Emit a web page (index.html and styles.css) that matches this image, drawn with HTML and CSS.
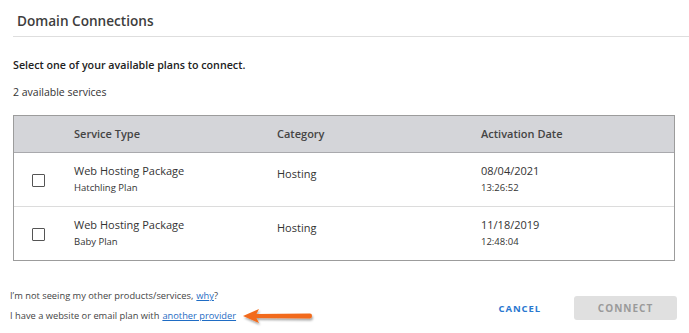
FILE: index.html
```html
<!DOCTYPE html>
<html>
<head>
	<title>Domain Connections</title>
	<link rel="stylesheet" href="styles.css">
</head>
<body>
	<section class="dialog">
		<header class="dialog-head">
			<h1 class="dialog-title">Domain Connections</h1>
		</header>

		<p class="lead">Select one of your available plans to connect.</p>
		<p class="count">2 available services</p>

		<!-- list of plans -->
		<div class="plans">
			<div class="plan-row plan-head">
				<span class="cell cell-check"></span>
				<span class="cell cell-type">Service Type</span>
				<span class="cell cell-cat">Category</span>
				<span class="cell cell-date">Activation Date</span>
			</div>
			<div class="plan-row">
				<span class="cell cell-check"><span class="box"></span></span>
				<span class="cell cell-type">Web Hosting Package<small>Hatchling Plan</small></span>
				<span class="cell cell-cat">Hosting</span>
				<span class="cell cell-date">08/04/2021<small>13:26:52</small></span>
			</div>
			<div class="plan-row">
				<span class="cell cell-check"><span class="box"></span></span>
				<span class="cell cell-type">Web Hosting Package<small>Baby Plan</small></span>
				<span class="cell cell-cat">Hosting</span>
				<span class="cell cell-date">11/18/2019<small>12:48:04</small></span>
			</div>
		</div>

		<footer class="dialog-foot">
			<div class="notes">
				<p>I’m not seeing my other products/services, <a href="#!">why</a>?</p>
				<p>I have a website or email plan with <a href="#!">another provider</a>
					<svg class="arrow" width="80" height="20" viewBox="0 0 80 20">
						<defs>
							<filter id="sh" x="-20%" y="-50%" width="140%" height="200%">
								<feDropShadow dx="1" dy="2" stdDeviation="1.2" flood-color="#000" flood-opacity="0.35"/>
							</filter>
						</defs>
						<path filter="url(#sh)" fill="#f26a1b" d="M2 9 L18 2 L15.5 7 L69 6.6 Q71 6.6 71 9 Q71 11.4 69 11.4 L15.5 11 L18 16 Z"/>
					</svg>
				</p>
			</div>
			<div class="actions">
				<a href="#!" class="btn-cancel">CANCEL</a>
				<span class="btn-connect">CONNECT</span>
			</div>
		</footer>
	</section>
</body>
</html>
```

FILE: styles.css
```css
	body {
		font-family: "Open Sans", "Liberation Sans", sans-serif;
		background: #fff;
		color: #333;
		margin: 0;
	}
	p {
		margin: 0;
	}
	.dialog {
		width: 689px;
		height: 333px;
		box-sizing: border-box;
		padding: 0 12px 0 13px;
	}
	.dialog-head {
		border-bottom: 1px solid #dedede;
		margin-right: -12px;
		padding: 12px 0 6px 4px;
	}
	.dialog-title {
		margin: 0;
		font-size: 13.6px;
		font-weight: 600;
		color: #3d3d3d;
		line-height: 18px;
	}
	.lead {
		margin-top: 20px;
		font-size: 10.7px;
		font-weight: 600;
		color: #222;
		line-height: 16px;
	}
	.count {
		margin-top: 11px;
		font-size: 10.5px;
		color: #333;
		line-height: 16px;
	}

	/* table */
	.plans {
		margin-top: 15px;
		border: 1px solid #9c9c9c;
		width: 662px;
		box-sizing: border-box;
	}
	.plan-row {
		display: grid;
		grid-template-columns: 60px 203px 204px 1fr;
		align-items: start;
		height: 53px;
		border-top: 1px solid #dcdcdc;
	}
	.plan-row:nth-child(2) {
		border-top: 0;
	}
	.plan-head {
		height: 36px;
		align-items: center;
		background: #d4d5d9;
		border-top: 0;
		border-bottom: 1px solid #a9a9ad;
	}
	.cell {
		font-size: 11px;
		color: #333;
		line-height: 16px;
	}
	.plan-row .cell-type,
	.plan-row .cell-date {
		padding-top: 10px;
	}
	.plan-row .cell-cat {
		padding-top: 13px;
	}
	.plan-row .cell-check {
		padding: 21px 0 0 18px;
	}
	.plan-head .cell {
		padding-top: 0;
		font-weight: 600;
		color: #444;
	}
	.cell small {
		display: block;
		font-size: 9.5px;
		line-height: 14px;
		margin-top: 2px;
	}
	.box {
		display: block;
		width: 11px;
		height: 11px;
		border: 1px solid #555;
		border-radius: 1px;
		background: #fff;
	}

	/* footer */
	.dialog-foot {
		display: flex;
		justify-content: space-between;
		align-items: center;
		margin-top: 25px;
		margin-left: -3px;
	}
	.notes p {
		font-size: 9.3px;
		color: #444;
		line-height: 20px;
		display: flex;
		align-items: center;
	}
	.notes a {
		color: #1f6cc4;
		text-decoration: underline;
		margin-left: 3px;
	}
	.arrow {
		margin: -1px 0 -3px 5px;
	}
	.actions {
		display: flex;
		align-items: center;
		gap: 33px;
		margin-top: 4px;
	}
	.btn-cancel {
		font-size: 9.5px;
		font-weight: 700;
		letter-spacing: 0.9px;
		color: #2a78d0;
		text-decoration: none;
	}
	.btn-connect {
		display: block;
		width: 103px;
		height: 24px;
		line-height: 24px;
		text-align: center;
		background: #e0e0e0;
		border-radius: 3px;
		font-size: 10px;
		font-weight: 700;
		letter-spacing: 1px;
		color: #9a9a9a;
	}
```
